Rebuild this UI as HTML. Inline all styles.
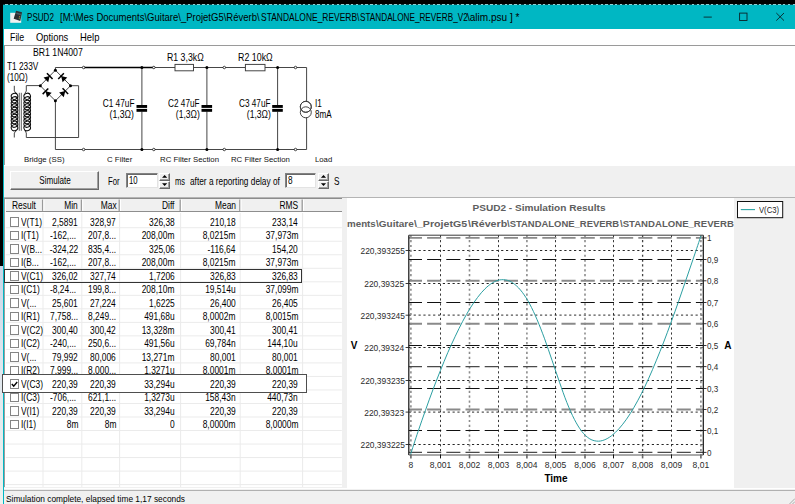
<!DOCTYPE html>
<html lang="fr"><head><meta charset="utf-8"><title>PSUD2</title>
<style>
html,body{margin:0;padding:0}
body{width:795px;height:504px;overflow:hidden;background:#f0f0f0;font-family:'Liberation Sans',sans-serif;position:relative}
.t{position:absolute;white-space:pre;display:block}
.abs{position:absolute}
svg{position:absolute;left:0;top:0;overflow:visible}
</style></head><body>

<div class="abs" style="left:0;top:0;width:795px;height:4.3px;background:#000"></div>
<div class="abs" style="left:0;top:0;width:3px;height:266px;background:#000"></div>
<div class="abs" style="left:0;top:266px;width:3px;height:238px;background:linear-gradient(#c9d6e8,#dfe7ee 40%,#eef2ee)"></div>
<div class="abs" id="titlebar" style="left:3px;top:4.3px;width:792px;height:24.5px;background:#00b7c3"></div>
<div class="abs" style="left:3px;top:4.3px;width:1px;height:500px;background:#00b7c3"></div>
<div class="abs" style="left:3px;top:4.1px;width:792px;height:0.9px;background:repeating-linear-gradient(90deg,#0a3a3e 0 2.4px,#8fd0d4 2.4px 4.8px)"></div>
<svg width="795" height="504" viewBox="0 0 795 504"><g id="appicon"><rect x="10.2" y="12.8" width="11" height="10" fill="#eef1f0"/><path d="M16.1 10.8 L22 12.3 L20.3 21.1 L13.7 18.7 Z" fill="#2a2e31"/><path d="M16.6 12.6 L21 13.7 L20.7 15.2 L16.2 14 Z" fill="#4d5a60"/><rect x="19" y="16.2" width="1.2" height="1.2" fill="#b8763a" transform="rotate(14 19.6 16.8)"/><rect x="18.7" y="17.9" width="1.2" height="1.2" fill="#5a8a4a" transform="rotate(14 19.3 18.5)"/></g></svg>
<span class="t" style="top:9.90px;font-size:10.2px;line-height:15px;color:#000;left:27.40px;transform-origin:0 50%;transform:scaleX(0.7919);">PSUD2</span>
<span class="t" style="top:9.90px;font-size:10.2px;line-height:15px;color:#000;left:60.20px;transform-origin:0 50%;transform:scaleX(0.9326);">[M:\Mes Documents\Guitare\_ProjetG5\Réverb\</span>
<span class="t" style="top:9.90px;font-size:10.2px;line-height:15px;color:#000;left:260.70px;transform-origin:0 50%;transform:scaleX(0.8290);">STANDALONE_REVERB\</span>
<span class="t" style="top:9.90px;font-size:10.2px;line-height:15px;color:#000;left:359.50px;transform-origin:0 50%;transform:scaleX(0.8038);">STANDALONE_REVERB_V2</span>
<span class="t" style="top:9.90px;font-size:10.2px;line-height:15px;color:#000;left:467.40px;transform-origin:0 50%;transform:scaleX(0.9846);">\alim.psu ] *</span>
<svg width="795" height="504" viewBox="0 0 795 504"><g stroke="#0a2428" stroke-width="0.9" fill="none"><path d="M703.6 17.1H711.8"/><rect x="739.6" y="13.1" width="7.4" height="7.4"/><path d="M776.3 13 L784 20.6 M784 13 L776.3 20.6"/></g></svg>
<div class="abs" style="left:4px;top:28.8px;width:791px;height:16.6px;background:#fff"></div>
<span class="t" style="top:29.60px;font-size:10.2px;line-height:15px;color:#000;left:9.60px;transform-origin:0 50%;transform:scaleX(0.8650);">File</span>
<span class="t" style="top:29.60px;font-size:10.2px;line-height:15px;color:#000;left:35.70px;transform-origin:0 50%;transform:scaleX(0.9200);">Options</span>
<span class="t" style="top:29.60px;font-size:10.2px;line-height:15px;color:#000;left:79.80px;transform-origin:0 50%;transform:scaleX(0.9259);">Help</span>
<div class="abs" style="left:4px;top:45.2px;width:791px;height:119.6px;background:#fff;border-top:1px solid #9a9a9a;border-left:1px solid #9a9a9a;box-sizing:border-box"></div>
<svg width="795" height="504" viewBox="0 0 795 504" id="schematic"><g stroke="#3c3c3c" stroke-width="0.95" fill="none"><path d="M55.4 70.2V67.5 H83.6"/><path d="M153.8 67.5 H175 M193.5 67.5 H245.4 M265 67.5 H306.6 V101.5 M306.6 117.5 V149.5 H55.4 V101"/><rect x="175" y="64.4" width="18.5" height="6.4" fill="#fff"/><rect x="245.4" y="64.4" width="19.6" height="6.4" fill="#fff"/><path d="M141.9 67.5 V105.3 M141.9 111.5 V149.5"/><path d="M206.9 67.5 V105.3 M206.9 111.5 V149.5"/><path d="M277.6 67.5 V105.3 M277.6 111.5 V149.5"/><path d="M14.3 85.8 V91 L16.6 93.6 M14.3 137.5 V133 L16.6 130.4"/><path d="M24.8 93.6 L26.3 91 V85.6 H40"/><path d="M24.8 130.4 L26.3 133 V137.5 H78.6 V85.7 H71"/><path d="M19.3 92.8 V130.8 M21.3 92.8 V130.8" stroke="#555"/><path d="M40.2 85.7 L55.4 70.2 L70.6 85.7 L55.4 100.8 Z"/><ellipse cx="305.8" cy="106.8" rx="5.5" ry="5.5" fill="#fff"/><ellipse cx="305.8" cy="112.3" rx="5.5" ry="5.5"/><ellipse cx="305.8" cy="106.8" rx="5.5" ry="5.5"/></g><path d="M83.6 67.5 H153.8" stroke="#000" stroke-width="1.7"/><g stroke="#0a0a0a" stroke-width="1.05" fill="none"><ellipse cx="14.5" cy="96.30" rx="3.3" ry="3.0" transform="rotate(-20 14.5 96.30)"/><ellipse cx="14.5" cy="99.79" rx="3.3" ry="3.0" transform="rotate(-20 14.5 99.79)"/><ellipse cx="14.5" cy="103.28" rx="3.3" ry="3.0" transform="rotate(-20 14.5 103.28)"/><ellipse cx="14.5" cy="106.77" rx="3.3" ry="3.0" transform="rotate(-20 14.5 106.77)"/><ellipse cx="14.5" cy="110.26" rx="3.3" ry="3.0" transform="rotate(-20 14.5 110.26)"/><ellipse cx="14.5" cy="113.74" rx="3.3" ry="3.0" transform="rotate(-20 14.5 113.74)"/><ellipse cx="14.5" cy="117.23" rx="3.3" ry="3.0" transform="rotate(-20 14.5 117.23)"/><ellipse cx="14.5" cy="120.72" rx="3.3" ry="3.0" transform="rotate(-20 14.5 120.72)"/><ellipse cx="14.5" cy="124.21" rx="3.3" ry="3.0" transform="rotate(-20 14.5 124.21)"/><ellipse cx="14.5" cy="127.70" rx="3.3" ry="3.0" transform="rotate(-20 14.5 127.70)"/><ellipse cx="27.2" cy="96.30" rx="3.3" ry="3.0" transform="rotate(-20 27.2 96.30)"/><ellipse cx="27.2" cy="99.79" rx="3.3" ry="3.0" transform="rotate(-20 27.2 99.79)"/><ellipse cx="27.2" cy="103.28" rx="3.3" ry="3.0" transform="rotate(-20 27.2 103.28)"/><ellipse cx="27.2" cy="106.77" rx="3.3" ry="3.0" transform="rotate(-20 27.2 106.77)"/><ellipse cx="27.2" cy="110.26" rx="3.3" ry="3.0" transform="rotate(-20 27.2 110.26)"/><ellipse cx="27.2" cy="113.74" rx="3.3" ry="3.0" transform="rotate(-20 27.2 113.74)"/><ellipse cx="27.2" cy="117.23" rx="3.3" ry="3.0" transform="rotate(-20 27.2 117.23)"/><ellipse cx="27.2" cy="120.72" rx="3.3" ry="3.0" transform="rotate(-20 27.2 120.72)"/><ellipse cx="27.2" cy="124.21" rx="3.3" ry="3.0" transform="rotate(-20 27.2 124.21)"/><ellipse cx="27.2" cy="127.70" rx="3.3" ry="3.0" transform="rotate(-20 27.2 127.70)"/></g><rect x="136.5" y="105" width="10.6" height="2.9" fill="#000"/><rect x="136.5" y="108.9" width="10.6" height="2.9" fill="#000"/><rect x="201.5" y="105" width="10.6" height="2.9" fill="#000"/><rect x="201.5" y="108.9" width="10.6" height="2.9" fill="#000"/><rect x="272.2" y="105" width="10.6" height="2.9" fill="#000"/><rect x="272.2" y="108.9" width="10.6" height="2.9" fill="#000"/><circle cx="141.9" cy="67.5" r="1.5"/><circle cx="141.9" cy="149.5" r="1.5"/><circle cx="206.9" cy="67.5" r="1.5"/><circle cx="206.9" cy="149.5" r="1.5"/><circle cx="277.6" cy="67.5" r="1.5"/><circle cx="277.6" cy="149.5" r="1.5"/><circle cx="40.3" cy="85.7" r="1.5"/><circle cx="55.4" cy="70.2" r="1.5"/><circle cx="70.5" cy="85.7" r="1.5"/><circle cx="55.4" cy="100.8" r="1.5"/><circle cx="83.6" cy="67.5" r="1.25" fill="#fff" stroke="#000" stroke-width="0.7"/><circle cx="83.6" cy="149.5" r="1.25" fill="#fff" stroke="#000" stroke-width="0.7"/><circle cx="153.8" cy="67.5" r="1.25" fill="#fff" stroke="#000" stroke-width="0.7"/><circle cx="153.8" cy="149.5" r="1.25" fill="#fff" stroke="#000" stroke-width="0.7"/><circle cx="224.3" cy="67.5" r="1.25" fill="#fff" stroke="#000" stroke-width="0.7"/><circle cx="224.3" cy="149.5" r="1.25" fill="#fff" stroke="#000" stroke-width="0.7"/><circle cx="295.5" cy="67.5" r="1.25" fill="#fff" stroke="#000" stroke-width="0.7"/><circle cx="295.5" cy="149.5" r="1.25" fill="#fff" stroke="#000" stroke-width="0.7"/><g fill="#000"><g transform="translate(48 77.8) rotate(-44.5)"><path d="M-3 -3.3 L2.4 0 L-3 3.3 Z"/><rect x="1.7" y="-4" width="1.5" height="8"/></g><g transform="translate(62.8 77.8) rotate(-135.5)"><path d="M-3 -3.3 L2.4 0 L-3 3.3 Z"/><rect x="1.7" y="-4" width="1.5" height="8"/></g><g transform="translate(47.2 93) rotate(-135.5)"><path d="M-3 -3.3 L2.4 0 L-3 3.3 Z"/><rect x="1.7" y="-4" width="1.5" height="8"/></g><g transform="translate(63.6 92.8) rotate(-44.5)"><path d="M-3 -3.3 L2.4 0 L-3 3.3 Z"/><rect x="1.7" y="-4" width="1.5" height="8"/></g></g></svg>
<span class="t" style="top:45.20px;font-size:10.3px;line-height:15px;color:#000;left:33.20px;transform-origin:0 50%;transform:scaleX(0.8446);">BR1 1N4007</span>
<span class="t" style="top:58.70px;font-size:10.3px;line-height:15px;color:#000;left:7.10px;transform-origin:0 50%;transform:scaleX(0.8041);">T1 233V</span>
<span class="t" style="top:69.80px;font-size:10.3px;line-height:15px;color:#000;left:7.10px;transform-origin:0 50%;transform:scaleX(0.7920);">(10Ω)</span>
<span class="t" style="top:95.80px;font-size:10.3px;line-height:15px;color:#000;right:661.00px;transform-origin:100% 50%;transform:scaleX(0.8052);">C1 47uF</span>
<span class="t" style="top:106.90px;font-size:10.3px;line-height:15px;color:#000;right:661.00px;transform-origin:100% 50%;transform:scaleX(0.8417);">(1,3Ω)</span>
<span class="t" style="top:95.80px;font-size:10.3px;line-height:15px;color:#000;right:595.60px;transform-origin:100% 50%;transform:scaleX(0.7951);">C2 47uF</span>
<span class="t" style="top:106.90px;font-size:10.3px;line-height:15px;color:#000;right:595.60px;transform-origin:100% 50%;transform:scaleX(0.8313);">(1,3Ω)</span>
<span class="t" style="top:95.80px;font-size:10.3px;line-height:15px;color:#000;right:524.30px;transform-origin:100% 50%;transform:scaleX(0.7976);">C3 47uF</span>
<span class="t" style="top:106.90px;font-size:10.3px;line-height:15px;color:#000;right:524.30px;transform-origin:100% 50%;transform:scaleX(0.8348);">(1,3Ω)</span>
<span class="t" style="top:49.90px;font-size:10.3px;line-height:15px;color:#000;left:166.70px;transform-origin:0 50%;transform:scaleX(0.8499);">R1 3,3kΩ</span>
<span class="t" style="top:49.90px;font-size:10.3px;line-height:15px;color:#000;left:237.70px;transform-origin:0 50%;transform:scaleX(0.8606);">R2 10kΩ</span>
<span class="t" style="top:95.80px;font-size:10.3px;line-height:15px;color:#000;left:314.80px;transform-origin:0 50%;transform:scaleX(0.8000);">I1</span>
<span class="t" style="top:106.90px;font-size:10.3px;line-height:15px;color:#000;left:314.80px;transform-origin:0 50%;transform:scaleX(0.7841);">8mA</span>
<span class="t" style="top:154.50px;font-size:6.6px;line-height:10px;color:#111;left:24.00px;transform-origin:0 50%;transform:scaleX(1.1884);">Bridge (SS)</span>
<span class="t" style="top:154.50px;font-size:6.6px;line-height:10px;color:#111;left:106.70px;transform-origin:0 50%;transform:scaleX(1.1908);">C Filter</span>
<span class="t" style="top:154.50px;font-size:6.6px;line-height:10px;color:#111;left:159.80px;transform-origin:0 50%;transform:scaleX(1.1840);">RC Filter Section</span>
<span class="t" style="top:154.50px;font-size:6.6px;line-height:10px;color:#111;left:231.00px;transform-origin:0 50%;transform:scaleX(1.1799);">RC Filter Section</span>
<span class="t" style="top:154.50px;font-size:6.6px;line-height:10px;color:#111;left:314.80px;transform-origin:0 50%;transform:scaleX(1.1726);">Load</span>
<div class="abs" style="left:4px;top:164.8px;width:791px;height:1px;background:#fff"></div>
<div class="abs" id="simulate" style="left:10.2px;top:171.3px;width:88.8px;height:18.6px;box-sizing:border-box;background:#f0f0f0;border:1px solid;border-color:#fff #696969 #696969 #fff;box-shadow:inset -1px -1px 0 #a0a0a0"></div>
<span class="t" style="top:173.10px;font-size:10.3px;line-height:15px;color:#000;left:54.60px;transform-origin:50% 50%;transform:translateX(-50%) scaleX(0.7863);">Simulate</span>
<span class="t" style="top:173.50px;font-size:10.3px;line-height:15px;color:#000;left:107.80px;transform-origin:0 50%;transform:scaleX(0.7510);">For</span>
<div class="abs" style="left:126.3px;top:172.8px;width:31.4px;height:15.1px;box-sizing:border-box;background:#fff;border:1px solid;border-color:#828282 #e3e3e3 #e3e3e3 #828282;box-shadow:inset 1px 1px 0 #696969"></div>
<span class="t" style="top:172.80px;font-size:10.3px;line-height:15px;color:#000;left:129.40px;transform-origin:0 50%;transform:scaleX(0.7509);">10</span>
<div class="abs" style="left:159.4px;top:172.6px;width:11.1px;height:8px;box-sizing:border-box;background:#f0f0f0;border:1px solid;border-color:#fff #696969 #696969 #fff;box-shadow:inset -1px -1px 0 #a0a0a0"></div><div class="abs" style="left:159.4px;top:180.6px;width:11.1px;height:8px;box-sizing:border-box;background:#f0f0f0;border:1px solid;border-color:#fff #696969 #696969 #fff;box-shadow:inset -1px -1px 0 #a0a0a0"></div><svg width="795" height="504" viewBox="0 0 795 504"><path d="M164.65 175.1 l2.6 2.6 h-5.2z M164.65 185.9 l2.6 -2.6 h-5.2z" fill="#000"/></svg>
<span class="t" style="top:173.50px;font-size:10.3px;line-height:15px;color:#000;left:174.50px;transform-origin:0 50%;transform:scaleX(0.7286);">ms</span>
<span class="t" style="top:173.50px;font-size:10.3px;line-height:15px;color:#000;left:190.20px;transform-origin:0 50%;transform:scaleX(0.8045);">after a reporting delay of</span>
<div class="abs" style="left:285.3px;top:172.8px;width:31.2px;height:15.1px;box-sizing:border-box;background:#fff;border:1px solid;border-color:#828282 #e3e3e3 #e3e3e3 #828282;box-shadow:inset 1px 1px 0 #696969"></div>
<span class="t" style="top:172.80px;font-size:10.3px;line-height:15px;color:#000;left:288.40px;transform-origin:0 50%;transform:scaleX(0.8000);">8</span>
<div class="abs" style="left:318.2px;top:172.6px;width:11.2px;height:8px;box-sizing:border-box;background:#f0f0f0;border:1px solid;border-color:#fff #696969 #696969 #fff;box-shadow:inset -1px -1px 0 #a0a0a0"></div><div class="abs" style="left:318.2px;top:180.6px;width:11.2px;height:8px;box-sizing:border-box;background:#f0f0f0;border:1px solid;border-color:#fff #696969 #696969 #fff;box-shadow:inset -1px -1px 0 #a0a0a0"></div><svg width="795" height="504" viewBox="0 0 795 504"><path d="M323.5 175.1 l2.6 2.6 h-5.2z M323.5 185.9 l2.6 -2.6 h-5.2z" fill="#000"/></svg>
<span class="t" style="top:173.50px;font-size:10.3px;line-height:15px;color:#000;left:333.60px;transform-origin:0 50%;transform:scaleX(0.8000);">S</span>
<div class="abs" id="list" style="left:4.2px;top:197.8px;width:337.6px;height:289.2px;background:#fff;box-sizing:border-box;border-left:1.6px solid #9c9c9c;border-top:1.2px solid #8c8c8c"></div>
<svg width="795" height="504" viewBox="0 0 795 504"><g stroke="#ebebeb" stroke-width="1" fill="none"><path d="M5.8 227.72 H341.8"/><path d="M5.8 241.24 H341.8"/><path d="M5.8 254.76 H341.8"/><path d="M5.8 268.28 H341.8"/><path d="M5.8 281.80 H341.8"/><path d="M5.8 295.32 H341.8"/><path d="M5.8 308.84 H341.8"/><path d="M5.8 322.36 H341.8"/><path d="M5.8 335.88 H341.8"/><path d="M5.8 349.40 H341.8"/><path d="M5.8 362.92 H341.8"/><path d="M5.8 376.44 H341.8"/><path d="M5.8 389.96 H341.8"/><path d="M5.8 403.48 H341.8"/><path d="M5.8 417.00 H341.8"/><path d="M5.8 430.52 H341.8"/><path d="M5.8 444.04 H341.8"/><path d="M5.8 457.56 H341.8"/><path d="M5.8 471.08 H341.8"/><path d="M5.8 484.60 H341.8"/><path d="M43 213 V487"/><path d="M81.8 213 V487"/><path d="M119.6 213 V487"/><path d="M180.6 213 V487"/><path d="M240.2 213 V487"/><path d="M302.6 213 V487"/></g></svg>
<div class="abs" style="left:5.8px;top:199px;width:336px;height:13.4px;background:#f0f0f0;border-bottom:1.6px solid #8e8e8e;box-sizing:border-box"></div>
<svg width="795" height="504" viewBox="0 0 795 504"><path d="M42.6 199.5 V210.9" stroke="#9a9a9a" stroke-width="1.3"/><path d="M43.9 199.5 V210.9" stroke="#fff" stroke-width="1"/><path d="M81.4 199.5 V210.9" stroke="#9a9a9a" stroke-width="1.3"/><path d="M82.7 199.5 V210.9" stroke="#fff" stroke-width="1"/><path d="M119.2 199.5 V210.9" stroke="#9a9a9a" stroke-width="1.3"/><path d="M120.5 199.5 V210.9" stroke="#fff" stroke-width="1"/><path d="M180.2 199.5 V210.9" stroke="#9a9a9a" stroke-width="1.3"/><path d="M181.5 199.5 V210.9" stroke="#fff" stroke-width="1"/><path d="M239.8 199.5 V210.9" stroke="#9a9a9a" stroke-width="1.3"/><path d="M241.1 199.5 V210.9" stroke="#fff" stroke-width="1"/><path d="M302.2 199.5 V210.9" stroke="#9a9a9a" stroke-width="1.3"/><path d="M303.5 199.5 V210.9" stroke="#fff" stroke-width="1"/></svg>
<span class="t" style="top:198.40px;font-size:10.4px;line-height:15px;color:#000;left:11.80px;transform-origin:0 50%;transform:scaleX(0.8100);">Result</span>
<span class="t" style="top:198.40px;font-size:10.4px;line-height:15px;color:#000;right:716.90px;transform-origin:100% 50%;transform:scaleX(0.8100);">Min</span>
<span class="t" style="top:198.40px;font-size:10.4px;line-height:15px;color:#000;right:678.40px;transform-origin:100% 50%;transform:scaleX(0.8100);">Max</span>
<span class="t" style="top:198.40px;font-size:10.4px;line-height:15px;color:#000;right:620.60px;transform-origin:100% 50%;transform:scaleX(0.8100);">Diff</span>
<span class="t" style="top:198.40px;font-size:10.4px;line-height:15px;color:#000;right:559.20px;transform-origin:100% 50%;transform:scaleX(0.8100);">Mean</span>
<span class="t" style="top:198.40px;font-size:10.4px;line-height:15px;color:#000;right:497.40px;transform-origin:100% 50%;transform:scaleX(0.8100);">RMS</span>
<div class="abs" style="left:9.8px;top:217.40px;width:9.4px;height:9.4px;box-sizing:border-box;border:1.4px solid #858585;background:#fff"></div>
<span class="t" style="top:214.50px;font-size:10.4px;line-height:15px;color:#000;left:21.30px;transform-origin:0 50%;transform:scaleX(0.8100);">V(T1)</span>
<span class="t" style="top:214.50px;font-size:10.4px;line-height:15px;color:#000;right:716.90px;transform-origin:100% 50%;transform:scaleX(0.8100);">2,5891</span>
<span class="t" style="top:214.50px;font-size:10.4px;line-height:15px;color:#000;right:678.80px;transform-origin:100% 50%;transform:scaleX(0.8100);">328,97</span>
<span class="t" style="top:214.50px;font-size:10.4px;line-height:15px;color:#000;right:620.60px;transform-origin:100% 50%;transform:scaleX(0.8100);">326,38</span>
<span class="t" style="top:214.50px;font-size:10.4px;line-height:15px;color:#000;right:559.20px;transform-origin:100% 50%;transform:scaleX(0.8100);">210,18</span>
<span class="t" style="top:214.50px;font-size:10.4px;line-height:15px;color:#000;right:497.00px;transform-origin:100% 50%;transform:scaleX(0.8100);">233,14</span>
<div class="abs" style="left:9.8px;top:230.90px;width:9.4px;height:9.4px;box-sizing:border-box;border:1.4px solid #858585;background:#fff"></div>
<span class="t" style="top:228.00px;font-size:10.4px;line-height:15px;color:#000;left:21.30px;transform-origin:0 50%;transform:scaleX(0.8100);">I(T1)</span>
<span class="t" style="top:228.00px;font-size:10.4px;line-height:15px;color:#000;left:49.80px;transform-origin:0 50%;transform:scaleX(0.8100);">-162,...</span>
<span class="t" style="top:228.00px;font-size:10.4px;line-height:15px;color:#000;left:88.30px;transform-origin:0 50%;transform:scaleX(0.8100);">207,8...</span>
<span class="t" style="top:228.00px;font-size:10.4px;line-height:15px;color:#000;right:620.60px;transform-origin:100% 50%;transform:scaleX(0.8100);">208,00m</span>
<span class="t" style="top:228.00px;font-size:10.4px;line-height:15px;color:#000;right:559.20px;transform-origin:100% 50%;transform:scaleX(0.8100);">8,0215m</span>
<span class="t" style="top:228.00px;font-size:10.4px;line-height:15px;color:#000;right:497.00px;transform-origin:100% 50%;transform:scaleX(0.8100);">37,973m</span>
<div class="abs" style="left:9.8px;top:244.40px;width:9.4px;height:9.4px;box-sizing:border-box;border:1.4px solid #858585;background:#fff"></div>
<span class="t" style="top:241.50px;font-size:10.4px;line-height:15px;color:#000;left:21.30px;transform-origin:0 50%;transform:scaleX(0.8100);">V(B...</span>
<span class="t" style="top:241.50px;font-size:10.4px;line-height:15px;color:#000;right:716.90px;transform-origin:100% 50%;transform:scaleX(0.8100);">-324,22</span>
<span class="t" style="top:241.50px;font-size:10.4px;line-height:15px;color:#000;left:88.30px;transform-origin:0 50%;transform:scaleX(0.8100);">835,4...</span>
<span class="t" style="top:241.50px;font-size:10.4px;line-height:15px;color:#000;right:620.60px;transform-origin:100% 50%;transform:scaleX(0.8100);">325,06</span>
<span class="t" style="top:241.50px;font-size:10.4px;line-height:15px;color:#000;right:559.20px;transform-origin:100% 50%;transform:scaleX(0.8100);">-116,64</span>
<span class="t" style="top:241.50px;font-size:10.4px;line-height:15px;color:#000;right:497.00px;transform-origin:100% 50%;transform:scaleX(0.8100);">154,20</span>
<div class="abs" style="left:9.8px;top:257.90px;width:9.4px;height:9.4px;box-sizing:border-box;border:1.4px solid #858585;background:#fff"></div>
<span class="t" style="top:255.00px;font-size:10.4px;line-height:15px;color:#000;left:21.30px;transform-origin:0 50%;transform:scaleX(0.8100);">I(B...</span>
<span class="t" style="top:255.00px;font-size:10.4px;line-height:15px;color:#000;left:49.80px;transform-origin:0 50%;transform:scaleX(0.8100);">-162,...</span>
<span class="t" style="top:255.00px;font-size:10.4px;line-height:15px;color:#000;left:88.30px;transform-origin:0 50%;transform:scaleX(0.8100);">207,8...</span>
<span class="t" style="top:255.00px;font-size:10.4px;line-height:15px;color:#000;right:620.60px;transform-origin:100% 50%;transform:scaleX(0.8100);">208,00m</span>
<span class="t" style="top:255.00px;font-size:10.4px;line-height:15px;color:#000;right:559.20px;transform-origin:100% 50%;transform:scaleX(0.8100);">8,0215m</span>
<span class="t" style="top:255.00px;font-size:10.4px;line-height:15px;color:#000;right:497.00px;transform-origin:100% 50%;transform:scaleX(0.8100);">37,973m</span>
<div class="abs" style="left:9.8px;top:271.40px;width:9.4px;height:9.4px;box-sizing:border-box;border:1.4px solid #858585;background:#fff"></div>
<span class="t" style="top:268.50px;font-size:10.4px;line-height:15px;color:#000;left:21.30px;transform-origin:0 50%;transform:scaleX(0.8100);">V(C1)</span>
<span class="t" style="top:268.50px;font-size:10.4px;line-height:15px;color:#000;right:716.90px;transform-origin:100% 50%;transform:scaleX(0.8100);">326,02</span>
<span class="t" style="top:268.50px;font-size:10.4px;line-height:15px;color:#000;right:678.80px;transform-origin:100% 50%;transform:scaleX(0.8100);">327,74</span>
<span class="t" style="top:268.50px;font-size:10.4px;line-height:15px;color:#000;right:620.60px;transform-origin:100% 50%;transform:scaleX(0.8100);">1,7206</span>
<span class="t" style="top:268.50px;font-size:10.4px;line-height:15px;color:#000;right:559.20px;transform-origin:100% 50%;transform:scaleX(0.8100);">326,83</span>
<span class="t" style="top:268.50px;font-size:10.4px;line-height:15px;color:#000;right:497.00px;transform-origin:100% 50%;transform:scaleX(0.8100);">326,83</span>
<div class="abs" style="left:9.8px;top:284.90px;width:9.4px;height:9.4px;box-sizing:border-box;border:1.4px solid #858585;background:#fff"></div>
<span class="t" style="top:282.00px;font-size:10.4px;line-height:15px;color:#000;left:21.30px;transform-origin:0 50%;transform:scaleX(0.8100);">I(C1)</span>
<span class="t" style="top:282.00px;font-size:10.4px;line-height:15px;color:#000;left:49.80px;transform-origin:0 50%;transform:scaleX(0.8100);">-8,24...</span>
<span class="t" style="top:282.00px;font-size:10.4px;line-height:15px;color:#000;left:88.30px;transform-origin:0 50%;transform:scaleX(0.8100);">199,8...</span>
<span class="t" style="top:282.00px;font-size:10.4px;line-height:15px;color:#000;right:620.60px;transform-origin:100% 50%;transform:scaleX(0.8100);">208,10m</span>
<span class="t" style="top:282.00px;font-size:10.4px;line-height:15px;color:#000;right:559.20px;transform-origin:100% 50%;transform:scaleX(0.8100);">19,514u</span>
<span class="t" style="top:282.00px;font-size:10.4px;line-height:15px;color:#000;right:497.00px;transform-origin:100% 50%;transform:scaleX(0.8100);">37,099m</span>
<div class="abs" style="left:9.8px;top:298.40px;width:9.4px;height:9.4px;box-sizing:border-box;border:1.4px solid #858585;background:#fff"></div>
<span class="t" style="top:295.50px;font-size:10.4px;line-height:15px;color:#000;left:21.30px;transform-origin:0 50%;transform:scaleX(0.8100);">V(...</span>
<span class="t" style="top:295.50px;font-size:10.4px;line-height:15px;color:#000;right:716.90px;transform-origin:100% 50%;transform:scaleX(0.8100);">25,601</span>
<span class="t" style="top:295.50px;font-size:10.4px;line-height:15px;color:#000;right:678.80px;transform-origin:100% 50%;transform:scaleX(0.8100);">27,224</span>
<span class="t" style="top:295.50px;font-size:10.4px;line-height:15px;color:#000;right:620.60px;transform-origin:100% 50%;transform:scaleX(0.8100);">1,6225</span>
<span class="t" style="top:295.50px;font-size:10.4px;line-height:15px;color:#000;right:559.20px;transform-origin:100% 50%;transform:scaleX(0.8100);">26,400</span>
<span class="t" style="top:295.50px;font-size:10.4px;line-height:15px;color:#000;right:497.00px;transform-origin:100% 50%;transform:scaleX(0.8100);">26,405</span>
<div class="abs" style="left:9.8px;top:311.90px;width:9.4px;height:9.4px;box-sizing:border-box;border:1.4px solid #858585;background:#fff"></div>
<span class="t" style="top:309.00px;font-size:10.4px;line-height:15px;color:#000;left:21.30px;transform-origin:0 50%;transform:scaleX(0.8100);">I(R1)</span>
<span class="t" style="top:309.00px;font-size:10.4px;line-height:15px;color:#000;left:49.80px;transform-origin:0 50%;transform:scaleX(0.8100);">7,758...</span>
<span class="t" style="top:309.00px;font-size:10.4px;line-height:15px;color:#000;left:88.30px;transform-origin:0 50%;transform:scaleX(0.8100);">8,249...</span>
<span class="t" style="top:309.00px;font-size:10.4px;line-height:15px;color:#000;right:620.60px;transform-origin:100% 50%;transform:scaleX(0.8100);">491,68u</span>
<span class="t" style="top:309.00px;font-size:10.4px;line-height:15px;color:#000;right:559.20px;transform-origin:100% 50%;transform:scaleX(0.8100);">8,0002m</span>
<span class="t" style="top:309.00px;font-size:10.4px;line-height:15px;color:#000;right:497.00px;transform-origin:100% 50%;transform:scaleX(0.8100);">8,0015m</span>
<div class="abs" style="left:9.8px;top:325.40px;width:9.4px;height:9.4px;box-sizing:border-box;border:1.4px solid #858585;background:#fff"></div>
<span class="t" style="top:322.50px;font-size:10.4px;line-height:15px;color:#000;left:21.30px;transform-origin:0 50%;transform:scaleX(0.8100);">V(C2)</span>
<span class="t" style="top:322.50px;font-size:10.4px;line-height:15px;color:#000;right:716.90px;transform-origin:100% 50%;transform:scaleX(0.8100);">300,40</span>
<span class="t" style="top:322.50px;font-size:10.4px;line-height:15px;color:#000;right:678.80px;transform-origin:100% 50%;transform:scaleX(0.8100);">300,42</span>
<span class="t" style="top:322.50px;font-size:10.4px;line-height:15px;color:#000;right:620.60px;transform-origin:100% 50%;transform:scaleX(0.8100);">13,328m</span>
<span class="t" style="top:322.50px;font-size:10.4px;line-height:15px;color:#000;right:559.20px;transform-origin:100% 50%;transform:scaleX(0.8100);">300,41</span>
<span class="t" style="top:322.50px;font-size:10.4px;line-height:15px;color:#000;right:497.00px;transform-origin:100% 50%;transform:scaleX(0.8100);">300,41</span>
<div class="abs" style="left:9.8px;top:338.90px;width:9.4px;height:9.4px;box-sizing:border-box;border:1.4px solid #858585;background:#fff"></div>
<span class="t" style="top:336.00px;font-size:10.4px;line-height:15px;color:#000;left:21.30px;transform-origin:0 50%;transform:scaleX(0.8100);">I(C2)</span>
<span class="t" style="top:336.00px;font-size:10.4px;line-height:15px;color:#000;left:49.80px;transform-origin:0 50%;transform:scaleX(0.8100);">-240,...</span>
<span class="t" style="top:336.00px;font-size:10.4px;line-height:15px;color:#000;left:88.30px;transform-origin:0 50%;transform:scaleX(0.8100);">250,6...</span>
<span class="t" style="top:336.00px;font-size:10.4px;line-height:15px;color:#000;right:620.60px;transform-origin:100% 50%;transform:scaleX(0.8100);">491,56u</span>
<span class="t" style="top:336.00px;font-size:10.4px;line-height:15px;color:#000;right:559.20px;transform-origin:100% 50%;transform:scaleX(0.8100);">69,784n</span>
<span class="t" style="top:336.00px;font-size:10.4px;line-height:15px;color:#000;right:497.00px;transform-origin:100% 50%;transform:scaleX(0.8100);">144,10u</span>
<div class="abs" style="left:9.8px;top:352.40px;width:9.4px;height:9.4px;box-sizing:border-box;border:1.4px solid #858585;background:#fff"></div>
<span class="t" style="top:349.50px;font-size:10.4px;line-height:15px;color:#000;left:21.30px;transform-origin:0 50%;transform:scaleX(0.8100);">V(...</span>
<span class="t" style="top:349.50px;font-size:10.4px;line-height:15px;color:#000;right:716.90px;transform-origin:100% 50%;transform:scaleX(0.8100);">79,992</span>
<span class="t" style="top:349.50px;font-size:10.4px;line-height:15px;color:#000;right:678.80px;transform-origin:100% 50%;transform:scaleX(0.8100);">80,006</span>
<span class="t" style="top:349.50px;font-size:10.4px;line-height:15px;color:#000;right:620.60px;transform-origin:100% 50%;transform:scaleX(0.8100);">13,271m</span>
<span class="t" style="top:349.50px;font-size:10.4px;line-height:15px;color:#000;right:559.20px;transform-origin:100% 50%;transform:scaleX(0.8100);">80,001</span>
<span class="t" style="top:349.50px;font-size:10.4px;line-height:15px;color:#000;right:497.00px;transform-origin:100% 50%;transform:scaleX(0.8100);">80,001</span>
<div class="abs" style="left:9.8px;top:365.90px;width:9.4px;height:9.4px;box-sizing:border-box;border:1.4px solid #858585;background:#fff"></div>
<span class="t" style="top:363.00px;font-size:10.4px;line-height:15px;color:#000;left:21.30px;transform-origin:0 50%;transform:scaleX(0.8100);">I(R2)</span>
<span class="t" style="top:363.00px;font-size:10.4px;line-height:15px;color:#000;left:49.80px;transform-origin:0 50%;transform:scaleX(0.8100);">7,999...</span>
<span class="t" style="top:363.00px;font-size:10.4px;line-height:15px;color:#000;left:88.30px;transform-origin:0 50%;transform:scaleX(0.8100);">8,000...</span>
<span class="t" style="top:363.00px;font-size:10.4px;line-height:15px;color:#000;right:620.60px;transform-origin:100% 50%;transform:scaleX(0.8100);">1,3271u</span>
<span class="t" style="top:363.00px;font-size:10.4px;line-height:15px;color:#000;right:559.20px;transform-origin:100% 50%;transform:scaleX(0.8100);">8,0001m</span>
<span class="t" style="top:363.00px;font-size:10.4px;line-height:15px;color:#000;right:497.00px;transform-origin:100% 50%;transform:scaleX(0.8100);">8,0001m</span>
<div class="abs" style="left:9.8px;top:392.90px;width:9.4px;height:9.4px;box-sizing:border-box;border:1.4px solid #858585;background:#fff"></div>
<span class="t" style="top:390.00px;font-size:10.4px;line-height:15px;color:#000;left:21.30px;transform-origin:0 50%;transform:scaleX(0.8100);">I(C3)</span>
<span class="t" style="top:390.00px;font-size:10.4px;line-height:15px;color:#000;left:49.80px;transform-origin:0 50%;transform:scaleX(0.8100);">-706,...</span>
<span class="t" style="top:390.00px;font-size:10.4px;line-height:15px;color:#000;left:88.30px;transform-origin:0 50%;transform:scaleX(0.8100);">621,1...</span>
<span class="t" style="top:390.00px;font-size:10.4px;line-height:15px;color:#000;right:620.60px;transform-origin:100% 50%;transform:scaleX(0.8100);">1,3273u</span>
<span class="t" style="top:390.00px;font-size:10.4px;line-height:15px;color:#000;right:559.20px;transform-origin:100% 50%;transform:scaleX(0.8100);">158,43n</span>
<span class="t" style="top:390.00px;font-size:10.4px;line-height:15px;color:#000;right:497.00px;transform-origin:100% 50%;transform:scaleX(0.8100);">440,73n</span>
<div class="abs" style="left:9.8px;top:406.40px;width:9.4px;height:9.4px;box-sizing:border-box;border:1.4px solid #858585;background:#fff"></div>
<span class="t" style="top:403.50px;font-size:10.4px;line-height:15px;color:#000;left:21.30px;transform-origin:0 50%;transform:scaleX(0.8100);">V(I1)</span>
<span class="t" style="top:403.50px;font-size:10.4px;line-height:15px;color:#000;right:716.90px;transform-origin:100% 50%;transform:scaleX(0.8100);">220,39</span>
<span class="t" style="top:403.50px;font-size:10.4px;line-height:15px;color:#000;right:678.80px;transform-origin:100% 50%;transform:scaleX(0.8100);">220,39</span>
<span class="t" style="top:403.50px;font-size:10.4px;line-height:15px;color:#000;right:620.60px;transform-origin:100% 50%;transform:scaleX(0.8100);">33,294u</span>
<span class="t" style="top:403.50px;font-size:10.4px;line-height:15px;color:#000;right:559.20px;transform-origin:100% 50%;transform:scaleX(0.8100);">220,39</span>
<span class="t" style="top:403.50px;font-size:10.4px;line-height:15px;color:#000;right:497.00px;transform-origin:100% 50%;transform:scaleX(0.8100);">220,39</span>
<div class="abs" style="left:9.8px;top:419.90px;width:9.4px;height:9.4px;box-sizing:border-box;border:1.4px solid #858585;background:#fff"></div>
<span class="t" style="top:417.00px;font-size:10.4px;line-height:15px;color:#000;left:21.30px;transform-origin:0 50%;transform:scaleX(0.8100);">I(I1)</span>
<span class="t" style="top:417.00px;font-size:10.4px;line-height:15px;color:#000;right:716.90px;transform-origin:100% 50%;transform:scaleX(0.8100);">8m</span>
<span class="t" style="top:417.00px;font-size:10.4px;line-height:15px;color:#000;right:678.80px;transform-origin:100% 50%;transform:scaleX(0.8100);">8m</span>
<span class="t" style="top:417.00px;font-size:10.4px;line-height:15px;color:#000;right:620.60px;transform-origin:100% 50%;transform:scaleX(0.8100);">0</span>
<span class="t" style="top:417.00px;font-size:10.4px;line-height:15px;color:#000;right:559.20px;transform-origin:100% 50%;transform:scaleX(0.8100);">8,0000m</span>
<span class="t" style="top:417.00px;font-size:10.4px;line-height:15px;color:#000;right:497.00px;transform-origin:100% 50%;transform:scaleX(0.8100);">8,0000m</span>
<div class="abs" style="left:4.2px;top:268.8px;width:297.4px;height:14.6px;box-sizing:border-box;border:1px solid #333"></div>
<div class="abs" style="left:2.4px;top:373.9px;width:305px;height:19.3px;box-sizing:border-box;border:1px solid #4e4e4e;background:#fff"></div>
<div class="abs" style="left:9.8px;top:379.40px;width:9.4px;height:9.4px;box-sizing:border-box;border:1.4px solid #858585;background:#fff"></div>
<span class="t" style="top:376.50px;font-size:10.4px;line-height:15px;color:#000;left:21.30px;transform-origin:0 50%;transform:scaleX(0.8100);">V(C3)</span>
<span class="t" style="top:376.50px;font-size:10.4px;line-height:15px;color:#000;right:716.90px;transform-origin:100% 50%;transform:scaleX(0.8100);">220,39</span>
<span class="t" style="top:376.50px;font-size:10.4px;line-height:15px;color:#000;right:678.80px;transform-origin:100% 50%;transform:scaleX(0.8100);">220,39</span>
<span class="t" style="top:376.50px;font-size:10.4px;line-height:15px;color:#000;right:620.60px;transform-origin:100% 50%;transform:scaleX(0.8100);">33,294u</span>
<span class="t" style="top:376.50px;font-size:10.4px;line-height:15px;color:#000;right:559.20px;transform-origin:100% 50%;transform:scaleX(0.8100);">220,39</span>
<span class="t" style="top:376.50px;font-size:10.4px;line-height:15px;color:#000;right:497.00px;transform-origin:100% 50%;transform:scaleX(0.8100);">220,39</span>
<svg width="795" height="504" viewBox="0 0 795 504"><path d="M11.8 384.1 l1.9 2 l3.5 -4.1" stroke="#000" stroke-width="1.4" fill="none"/></svg>
<div class="abs" style="left:4px;top:197px;width:791px;height:1px;background:#b4b4b4"></div>
<div class="abs" id="chart" style="left:347px;top:198px;width:387.2px;height:290px;background:#fff"></div>
<svg width="795" height="504" viewBox="0 0 795 504" id="plot"><path d="M408.8 250.50 H703.3" stroke="#1a1a1a" stroke-width="0.95" stroke-dasharray="2.2 2.66"/><path d="M408.8 283.50 H703.3" stroke="#1a1a1a" stroke-width="0.95" stroke-dasharray="2.2 2.66"/><path d="M408.8 315.20 H703.3" stroke="#555" stroke-width="1.3" stroke-dasharray="2.2 2.66"/><path d="M408.8 347.50 H703.3" stroke="#1a1a1a" stroke-width="0.95" stroke-dasharray="2.2 2.66"/><path d="M408.8 380.50 H703.3" stroke="#1a1a1a" stroke-width="0.95" stroke-dasharray="2.2 2.66"/><path d="M408.8 412.10 H703.3" stroke="#555" stroke-width="1.3" stroke-dasharray="2.2 2.66"/><path d="M408.8 444.50 H703.3" stroke="#1a1a1a" stroke-width="0.95" stroke-dasharray="2.2 2.66"/><path d="M410.90 235.2 V455" stroke="#8c8c8c" stroke-width="1.6" stroke-dasharray="2.2 2.66"/><path d="M440.50 235.2 V455" stroke="#222" stroke-width="0.9" stroke-dasharray="2.2 2.66"/><path d="M469.50 235.2 V455" stroke="#8c8c8c" stroke-width="1.6" stroke-dasharray="2.2 2.66"/><path d="M498.50 235.2 V455" stroke="#222" stroke-width="0.9" stroke-dasharray="2.2 2.66"/><path d="M526.90 235.2 V455" stroke="#8c8c8c" stroke-width="1.6" stroke-dasharray="2.2 2.66"/><path d="M555.50 235.2 V455" stroke="#222" stroke-width="0.9" stroke-dasharray="2.2 2.66"/><path d="M585.00 235.2 V455" stroke="#8c8c8c" stroke-width="1.6" stroke-dasharray="2.2 2.66"/><path d="M613.50 235.2 V455" stroke="#222" stroke-width="0.9" stroke-dasharray="2.2 2.66"/><path d="M642.60 235.2 V455" stroke="#444" stroke-width="1.3" stroke-dasharray="2.2 2.66"/><path d="M671.50 235.2 V455" stroke="#222" stroke-width="0.9" stroke-dasharray="2.2 2.66"/><path d="M700.90 235.2 V455" stroke="#8c8c8c" stroke-width="1.6" stroke-dasharray="2.2 2.66"/><path d="M408.8 237.90 H703.3" stroke="#8a8a8a" stroke-width="1.9" stroke-dasharray="14.1 5.1" stroke-dashoffset="0.9"/><path d="M408.8 259.50 H703.3" stroke="#111" stroke-width="1" stroke-dasharray="14.1 5.1" stroke-dashoffset="0.9"/><path d="M408.8 280.80 H703.3" stroke="#8a8a8a" stroke-width="1.9" stroke-dasharray="14.1 5.1" stroke-dashoffset="0.9"/><path d="M408.8 302.50 H703.3" stroke="#111" stroke-width="1" stroke-dasharray="14.1 5.1" stroke-dashoffset="0.9"/><path d="M408.8 323.70 H703.3" stroke="#8a8a8a" stroke-width="1.9" stroke-dasharray="14.1 5.1" stroke-dashoffset="0.9"/><path d="M408.8 345.50 H703.3" stroke="#111" stroke-width="1" stroke-dasharray="14.1 5.1" stroke-dashoffset="0.9"/><path d="M408.8 366.60 H703.3" stroke="#4a4a4a" stroke-width="1.4" stroke-dasharray="14.1 5.1" stroke-dashoffset="0.9"/><path d="M408.8 388.50 H703.3" stroke="#111" stroke-width="1" stroke-dasharray="14.1 5.1" stroke-dashoffset="0.9"/><path d="M408.8 409.50 H703.3" stroke="#8a8a8a" stroke-width="1.9" stroke-dasharray="14.1 5.1" stroke-dashoffset="0.9"/><path d="M408.8 430.50 H703.3" stroke="#111" stroke-width="1" stroke-dasharray="14.1 5.1" stroke-dashoffset="0.9"/><path d="M408.8 452.40 H703.3" stroke="#4a4a4a" stroke-width="1.4" stroke-dasharray="14.1 5.1" stroke-dashoffset="0.9"/><path d="M408.8 235.2 V455 M703.3 235.2 V455" stroke="#1c1c1c" stroke-width="1.25" fill="none"/><path d="M408.8 235.2 H703.3" stroke="#3a3a3a" stroke-width="1" fill="none"/><path d="M408.8 455 H703.3" stroke="#555" stroke-width="1" fill="none"/><path d="M408.8 250.50 h-3.2" stroke="#222" stroke-width="0.9"/><path d="M408.8 283.50 h-3.2" stroke="#222" stroke-width="0.9"/><path d="M408.8 315.20 h-3.2" stroke="#222" stroke-width="0.9"/><path d="M408.8 347.50 h-3.2" stroke="#222" stroke-width="0.9"/><path d="M408.8 380.50 h-3.2" stroke="#222" stroke-width="0.9"/><path d="M408.8 412.10 h-3.2" stroke="#222" stroke-width="0.9"/><path d="M408.8 444.50 h-3.2" stroke="#222" stroke-width="0.9"/><path d="M703.3 237.90 h3.2" stroke="#222" stroke-width="0.9"/><path d="M703.3 259.50 h3.2" stroke="#222" stroke-width="0.9"/><path d="M703.3 280.80 h3.2" stroke="#222" stroke-width="0.9"/><path d="M703.3 302.50 h3.2" stroke="#222" stroke-width="0.9"/><path d="M703.3 323.70 h3.2" stroke="#222" stroke-width="0.9"/><path d="M703.3 345.50 h3.2" stroke="#222" stroke-width="0.9"/><path d="M703.3 366.60 h3.2" stroke="#222" stroke-width="0.9"/><path d="M703.3 388.50 h3.2" stroke="#222" stroke-width="0.9"/><path d="M703.3 409.50 h3.2" stroke="#222" stroke-width="0.9"/><path d="M703.3 430.50 h3.2" stroke="#222" stroke-width="0.9"/><path d="M703.3 452.40 h3.2" stroke="#222" stroke-width="0.9"/><path d="M410.90 455 v3.4" stroke="#666" stroke-width="1.6"/><path d="M440.50 455 v3.4" stroke="#111" stroke-width="1"/><path d="M469.50 455 v3.4" stroke="#666" stroke-width="1.6"/><path d="M498.50 455 v3.4" stroke="#111" stroke-width="1"/><path d="M526.90 455 v3.4" stroke="#666" stroke-width="1.6"/><path d="M555.50 455 v3.4" stroke="#111" stroke-width="1"/><path d="M585.00 455 v3.4" stroke="#666" stroke-width="1.6"/><path d="M613.50 455 v3.4" stroke="#111" stroke-width="1"/><path d="M642.60 455 v3.4" stroke="#666" stroke-width="1.6"/><path d="M671.50 455 v3.4" stroke="#111" stroke-width="1"/><path d="M700.90 455 v3.4" stroke="#666" stroke-width="1.6"/><path d="M410.6 454.3 C411.8 450.5 415.5 439.1 418.0 431.7 C420.5 424.3 423.0 417.2 425.5 410.2 C428.0 403.2 430.4 396.4 432.9 389.8 C435.4 383.2 437.9 376.8 440.4 370.6 C442.9 364.4 445.3 358.3 447.8 352.6 C450.3 346.9 452.8 341.4 455.3 336.2 C457.8 331.0 460.2 325.9 462.7 321.3 C465.2 316.7 467.6 312.3 470.1 308.3 C472.6 304.3 475.1 300.6 477.6 297.4 C480.1 294.1 482.5 291.2 485.0 288.8 C487.5 286.4 490.0 284.3 492.5 282.8 C495.0 281.3 497.4 280.3 499.9 279.9 C502.4 279.5 504.9 279.6 507.4 280.3 C509.9 281.1 512.3 282.4 514.8 284.4 C517.3 286.4 519.8 289.0 522.3 292.3 C524.8 295.6 527.2 299.4 529.7 304.0 C532.2 308.6 534.6 313.9 537.1 319.7 C539.6 325.5 542.1 332.1 544.6 338.8 C547.1 345.6 549.5 353.0 552.0 360.2 C554.5 367.4 557.0 375.1 559.5 382.2 C562.0 389.3 564.4 396.4 566.9 402.6 C569.4 408.8 571.9 414.6 574.4 419.4 C576.9 424.2 579.3 428.2 581.8 431.4 C584.3 434.6 586.7 436.9 589.2 438.5 C591.7 440.1 594.2 440.9 596.7 441.1 C599.2 441.4 601.6 440.9 604.1 440.0 C606.6 439.1 609.1 437.6 611.6 435.7 C614.1 433.8 616.5 431.4 619.0 428.7 C621.5 425.9 624.0 422.7 626.5 419.2 C629.0 415.7 631.4 411.8 633.9 407.5 C636.4 403.2 638.9 398.6 641.4 393.7 C643.9 388.8 646.3 383.6 648.8 378.1 C651.3 372.6 653.7 366.8 656.2 360.8 C658.7 354.8 661.2 348.5 663.7 342.1 C666.2 335.7 668.6 329.0 671.1 322.2 C673.6 315.4 676.1 308.4 678.6 301.3 C681.1 294.2 683.5 287.0 686.0 279.8 C688.5 272.6 691.0 265.2 693.5 257.9 C696.0 250.6 699.7 239.6 700.9 235.9" fill="none" stroke="#2c9fa2" stroke-width="1"/><rect x="737.5" y="201.5" width="45.2" height="16.2" fill="#fff" stroke="#111" stroke-width="1"/><path d="M740.8 209.6 H755" stroke="#2aa5a5" stroke-width="1.1"/></svg>
<span class="t" style="top:201.40px;font-size:9.8px;line-height:14px;color:#5e5e5e;font-weight:bold;left:539.20px;transform-origin:50% 50%;transform:translateX(-50%) scaleX(1.0266);">PSUD2 - Simulation Results</span>
<span class="t" style="top:216.60px;font-size:9.8px;line-height:14px;color:#5e5e5e;font-weight:bold;left:347.20px;transform-origin:0 50%;transform:scaleX(0.9981);">ments</span>
<span class="t" style="top:216.60px;font-size:9.8px;line-height:14px;color:#5e5e5e;font-weight:bold;left:376.30px;transform-origin:0 50%;transform:scaleX(1.0211);">\Guitare</span>
<span class="t" style="top:216.60px;font-size:9.8px;line-height:14px;color:#5e5e5e;font-weight:bold;left:414.40px;transform-origin:0 50%;transform:scaleX(1.0856);">\_ProjetG5</span>
<span class="t" style="top:216.60px;font-size:9.8px;line-height:14px;color:#5e5e5e;font-weight:bold;left:467.80px;transform-origin:0 50%;transform:scaleX(1.0907);">\Réverb</span>
<span class="t" style="top:216.60px;font-size:9.8px;line-height:14px;color:#5e5e5e;font-weight:bold;left:507.20px;transform-origin:0 50%;transform:scaleX(0.9647);">\STANDALONE_REVERB</span>
<span class="t" style="top:216.60px;font-size:9.8px;line-height:14px;color:#5e5e5e;font-weight:bold;left:619.60px;transform-origin:0 50%;transform:scaleX(0.9785);">\STANDALONE_REVERB</span>
<span class="t" style="top:245.00px;font-size:8.5px;line-height:12px;color:#2b2b2b;right:390.40px;transform-origin:100% 50%;transform:scaleX(0.9887);">220,393255</span>
<span class="t" style="top:278.00px;font-size:8.5px;line-height:12px;color:#2b2b2b;right:390.40px;transform-origin:100% 50%;transform:scaleX(0.9955);">220,39325</span>
<span class="t" style="top:309.70px;font-size:8.5px;line-height:12px;color:#2b2b2b;right:390.40px;transform-origin:100% 50%;transform:scaleX(0.9887);">220,393245</span>
<span class="t" style="top:342.00px;font-size:8.5px;line-height:12px;color:#2b2b2b;right:390.40px;transform-origin:100% 50%;transform:scaleX(0.9955);">220,39324</span>
<span class="t" style="top:375.00px;font-size:8.5px;line-height:12px;color:#2b2b2b;right:390.40px;transform-origin:100% 50%;transform:scaleX(0.9887);">220,393235</span>
<span class="t" style="top:406.60px;font-size:8.5px;line-height:12px;color:#2b2b2b;right:390.40px;transform-origin:100% 50%;transform:scaleX(0.9955);">220,39323</span>
<span class="t" style="top:439.00px;font-size:8.5px;line-height:12px;color:#2b2b2b;right:390.40px;transform-origin:100% 50%;transform:scaleX(0.9887);">220,393225</span>
<span class="t" style="top:232.20px;font-size:8.5px;line-height:12px;color:#2b2b2b;left:707.40px;transform-origin:0 50%;transform:scaleX(0.9500);">1</span>
<span class="t" style="top:253.80px;font-size:8.5px;line-height:12px;color:#2b2b2b;left:707.40px;transform-origin:0 50%;transform:scaleX(0.9500);">0,9</span>
<span class="t" style="top:275.10px;font-size:8.5px;line-height:12px;color:#2b2b2b;left:707.40px;transform-origin:0 50%;transform:scaleX(0.9500);">0,8</span>
<span class="t" style="top:296.80px;font-size:8.5px;line-height:12px;color:#2b2b2b;left:707.40px;transform-origin:0 50%;transform:scaleX(0.9500);">0,7</span>
<span class="t" style="top:318.00px;font-size:8.5px;line-height:12px;color:#2b2b2b;left:707.40px;transform-origin:0 50%;transform:scaleX(0.9500);">0,6</span>
<span class="t" style="top:339.80px;font-size:8.5px;line-height:12px;color:#2b2b2b;left:707.40px;transform-origin:0 50%;transform:scaleX(0.9500);">0,5</span>
<span class="t" style="top:360.90px;font-size:8.5px;line-height:12px;color:#2b2b2b;left:707.40px;transform-origin:0 50%;transform:scaleX(0.9500);">0,4</span>
<span class="t" style="top:382.80px;font-size:8.5px;line-height:12px;color:#2b2b2b;left:707.40px;transform-origin:0 50%;transform:scaleX(0.9500);">0,3</span>
<span class="t" style="top:403.80px;font-size:8.5px;line-height:12px;color:#2b2b2b;left:707.40px;transform-origin:0 50%;transform:scaleX(0.9500);">0,2</span>
<span class="t" style="top:424.80px;font-size:8.5px;line-height:12px;color:#2b2b2b;left:707.40px;transform-origin:0 50%;transform:scaleX(0.9500);">0,1</span>
<span class="t" style="top:446.70px;font-size:8.5px;line-height:12px;color:#2b2b2b;left:707.40px;transform-origin:0 50%;transform:scaleX(0.9500);">0</span>
<span class="t" style="top:458.80px;font-size:8.5px;line-height:12px;color:#2b2b2b;left:410.90px;transform-origin:50% 50%;transform:translateX(-50%) scaleX(1.0000);">8</span>
<span class="t" style="top:458.80px;font-size:8.5px;line-height:12px;color:#2b2b2b;left:440.50px;transform-origin:50% 50%;transform:translateX(-50%) scaleX(1.0000);">8,001</span>
<span class="t" style="top:458.80px;font-size:8.5px;line-height:12px;color:#2b2b2b;left:469.50px;transform-origin:50% 50%;transform:translateX(-50%) scaleX(1.0000);">8,002</span>
<span class="t" style="top:458.80px;font-size:8.5px;line-height:12px;color:#2b2b2b;left:498.50px;transform-origin:50% 50%;transform:translateX(-50%) scaleX(1.0000);">8,003</span>
<span class="t" style="top:458.80px;font-size:8.5px;line-height:12px;color:#2b2b2b;left:526.90px;transform-origin:50% 50%;transform:translateX(-50%) scaleX(1.0000);">8,004</span>
<span class="t" style="top:458.80px;font-size:8.5px;line-height:12px;color:#2b2b2b;left:555.50px;transform-origin:50% 50%;transform:translateX(-50%) scaleX(1.0000);">8,005</span>
<span class="t" style="top:458.80px;font-size:8.5px;line-height:12px;color:#2b2b2b;left:585.00px;transform-origin:50% 50%;transform:translateX(-50%) scaleX(1.0000);">8,006</span>
<span class="t" style="top:458.80px;font-size:8.5px;line-height:12px;color:#2b2b2b;left:613.50px;transform-origin:50% 50%;transform:translateX(-50%) scaleX(1.0000);">8,007</span>
<span class="t" style="top:458.80px;font-size:8.5px;line-height:12px;color:#2b2b2b;left:642.60px;transform-origin:50% 50%;transform:translateX(-50%) scaleX(1.0000);">8,008</span>
<span class="t" style="top:458.80px;font-size:8.5px;line-height:12px;color:#2b2b2b;left:671.50px;transform-origin:50% 50%;transform:translateX(-50%) scaleX(1.0000);">8,009</span>
<span class="t" style="top:458.80px;font-size:8.5px;line-height:12px;color:#2b2b2b;left:700.90px;transform-origin:50% 50%;transform:translateX(-50%) scaleX(1.0000);">8,01</span>
<span class="t" style="top:338.60px;font-size:10px;line-height:14px;color:#000;font-weight:bold;left:354.20px;transform-origin:50% 50%;transform:translateX(-50%) scaleX(1.0000);">V</span>
<span class="t" style="top:338.60px;font-size:10px;line-height:14px;color:#000;font-weight:bold;left:727.80px;transform-origin:50% 50%;transform:translateX(-50%) scaleX(1.0000);">A</span>
<span class="t" style="top:472.20px;font-size:10px;line-height:14px;color:#000;font-weight:bold;left:556.00px;transform-origin:50% 50%;transform:translateX(-50%) scaleX(1.0000);">Time</span>
<span class="t" style="top:203.60px;font-size:8.4px;line-height:12px;color:#222;left:759.40px;transform-origin:0 50%;transform:scaleX(0.9145);">V(C3)</span>
<div class="abs" style="left:4px;top:488px;width:791px;height:1px;background:#fff"></div>
<div class="abs" style="left:4px;top:490px;width:791px;height:1.2px;background:#b0b0b0"></div>
<span class="t" style="top:491.50px;font-size:9.8px;line-height:14px;color:#000;left:5.90px;transform-origin:0 50%;transform:scaleX(0.8515);">Simulation complete, elapsed time 1,17 seconds</span>
<svg width="795" height="504" viewBox="0 0 795 504"><path d="M789.5 504 L795 498.5 M792.5 504 L795 501.5" stroke="#a8a8a8" stroke-width="1"/></svg>
</body></html>
